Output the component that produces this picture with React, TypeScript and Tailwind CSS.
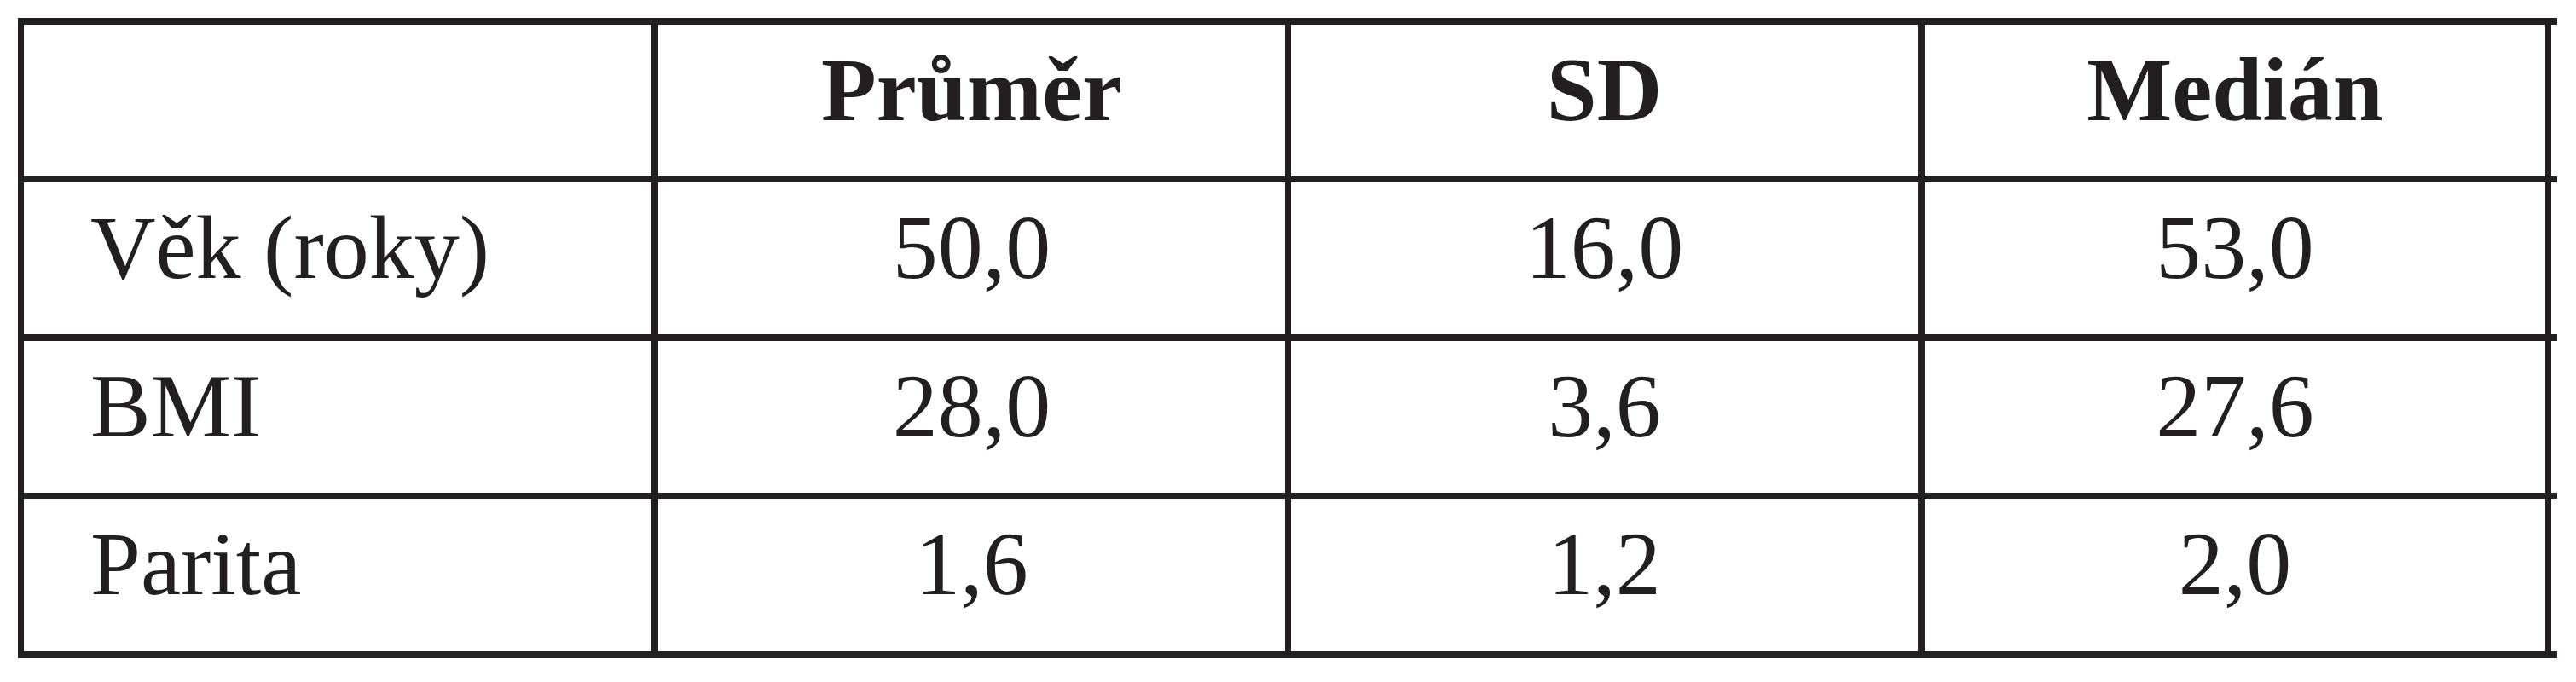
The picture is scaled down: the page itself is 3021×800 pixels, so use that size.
import React from "react";

const rows: { label: string; vals: string[] }[] = [
  { label: "Věk (roky)", vals: ["50,0", "16,0", "53,0"] },
  { label: "BMI", vals: ["28,0", "3,6", "27,6"] },
  { label: "Parita", vals: ["1,6", "1,2", "2,0"] },
];

const ink = "bg-[#231f20]";

function Row({
  first,
  cells,
  bold,
  h,
}: {
  first: string;
  cells: string[];
  bold?: boolean;
  h: string;
}) {
  const weight = bold ? "font-bold" : "font-normal";
  return (
    <div className={`flex w-[2978px] ${h}`}>
      <div className={`w-[7px] shrink-0 ${ink}`} />
      <div className={`w-[736px] shrink-0 pt-[24px] pl-[78px] text-left leading-none ${weight}`}>{first}</div>
      <div className={`w-[8px] shrink-0 ${ink}`} />
      <div className={`w-[735px] shrink-0 pt-[24px] text-center leading-none ${weight}`}>{cells[0]}</div>
      <div className={`w-[7px] shrink-0 ${ink}`} />
      <div className={`w-[735px] shrink-0 pt-[24px] text-center leading-none ${weight}`}>{cells[1]}</div>
      <div className={`w-[8px] shrink-0 ${ink}`} />
      <div className={`w-[728px] shrink-0 pt-[24px] text-center leading-none ${weight}`}>{cells[2]}</div>
      <div className={`w-[7px] shrink-0 ${ink}`} />
      <div className="w-[7px] shrink-0" />
    </div>
  );
}

export default function App() {
  return (
    <div
      className="w-[3021px] h-[800px] bg-white pt-[21px] pl-[21px] text-[#231f20] text-[106px]"
      style={{ fontFamily: '"Liberation Serif", "Times New Roman", serif' }}
    >
      <div className="flex flex-col w-[2978px]">
        <div className={`h-[8px] w-full ${ink}`} />
        <Row first="" cells={["Průměr", "SD", "Medián"]} bold h="h-[178px]" />
        <div className={`h-[7px] w-full ${ink}`} />
        <Row first={rows[0].label} cells={rows[0].vals} h="h-[178px]" />
        <div className={`h-[8px] w-full ${ink}`} />
        <Row first={rows[1].label} cells={rows[1].vals} h="h-[178px]" />
        <div className={`h-[7px] w-full ${ink}`} />
        <Row first={rows[2].label} cells={rows[2].vals} h="h-[179px]" />
        <div className={`h-[8px] w-full ${ink}`} />
      </div>
    </div>
  );
}
